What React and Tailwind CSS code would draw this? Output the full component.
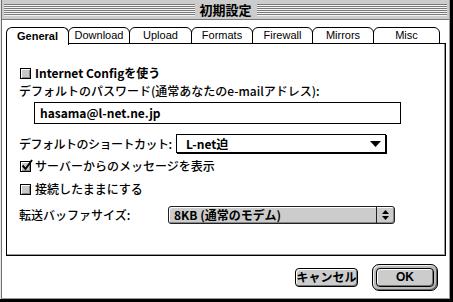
const tabs = [
  ["General", 63],
  ["Download", 62],
  ["Upload", 63],
  ["Formats", 62],
  ["Firewall", 61],
  ["Mirrors", 62],
  ["Misc", 67],
];

export default function App() {
  return (
    <div className="w-[453px] h-[302px] bg-black font-['Noto_Sans_CJK_JP',sans-serif] text-black">
      <div className="w-[450px] h-[299px] border-l border-[#e6e6e6]">
        <div className="h-full flex flex-col bg-white border-l border-r border-b border-l-[#6e6e6e] border-r-[#9a9a9a] border-b-[#9a9a9a]">
          {/* title bar */}
          <div className="h-[20px] shrink-0 bg-[#cccccc] border-b border-[#777] flex items-center px-[2px]">
            <div className="flex-1 h-[12px] bg-[repeating-linear-gradient(to_bottom,#7a7a7a_0px,#7a7a7a_1px,#f4f4f4_1px,#f4f4f4_2px)]" />
            <span className="px-[5px] text-[13px] font-bold leading-none">初期設定</span>
            <div className="flex-1 h-[12px] bg-[repeating-linear-gradient(to_bottom,#7a7a7a_0px,#7a7a7a_1px,#f4f4f4_1px,#f4f4f4_2px)]" />
          </div>

          {/* tabs */}
          <div className="mt-[7px] ml-[4px] h-[17px] flex items-start font-['Liberation_Sans',sans-serif]">
            {tabs.map(([name, w], i) => (
              <div
                key={name}
                style={{ width: w }}
                className={
                  i === 0
                    ? "relative z-10 h-[18px] border border-b-0 border-black rounded-t-[6px] bg-white flex items-center justify-center pb-[1px] text-[11px] font-bold leading-none"
                    : "h-[17px] -ml-px border border-black rounded-t-[6px] bg-white flex items-center justify-center text-[11px] leading-none"
                }
              >
                {name}
              </div>
            ))}
          </div>

          {/* panel */}
          <div className="-mt-px ml-[4px] w-[440px] h-[213px] shrink-0 border border-black shadow-[inset_-1px_-1px_0_#999] text-[12px] font-medium leading-none whitespace-nowrap">
            <div className="mt-[23px] h-[12px] flex items-center pl-[13px] gap-[4px]">
              <Check />
              <span className="font-semibold">Internet Configを使う</span>
            </div>
            <div className="mt-[4px] h-[16px] flex items-center pl-[12px]">
              デフォルトのパスワード(通常あなたのe-mailアドレス):
            </div>
            <div className="mt-[3px] ml-[27px] w-[367px] h-[22px] border border-black flex items-center pl-[5px] font-semibold">
              hasama@l-net.ne.jp
            </div>
            <div className="mt-[10px] h-[19px] flex items-center pl-[12px]">
              <span className="w-[157px] shrink-0 tracking-[-0.5px]">デフォルトのショートカット:</span>
              <div className="w-[210px] h-[19px] bg-white border border-black shadow-[1px_1px_0_#000] flex items-center pl-[9px] pr-[4px]">
                <span className="flex-1 font-bold">L-net迫</span>
                <svg width="11" height="6" viewBox="0 0 11 6">
                  <path d="M0 0H11L5.5 6Z" fill="#000" />
                </svg>
              </div>
            </div>
            <div className="mt-[6px] h-[14px] flex items-center pl-[13px] gap-[4px]">
              <Check checked />
              <span>サーバーからのメッセージを表示</span>
            </div>
            <div className="mt-[9px] h-[14px] flex items-center pl-[13px] gap-[4px]">
              <Check />
              <span>接続したままにする</span>
            </div>
            <div className="mt-[10px] h-[18px] flex items-center pl-[12px]">
              <span className="w-[149px] shrink-0">転送バッファサイズ:</span>
              <div className="w-[227px] h-[18px] bg-[#cccccc] border border-[#222] rounded-[3px] shadow-[inset_1px_1px_0_#fff,inset_-1px_-1px_0_#888] flex items-center">
                <span className="flex-1 pl-[5px] font-bold">8KB (通常のモデム)</span>
                <div className="w-[18px] h-full border-l border-[#222] flex items-center justify-center">
                  <svg width="7" height="10" viewBox="0 0 7 10">
                    <path d="M3.5 0L7 4H0Z M0 6H7L3.5 10Z" fill="#000" />
                  </svg>
                </div>
              </div>
            </div>
          </div>

          {/* buttons */}
          <div className="flex-1 flex items-center justify-end gap-[14px] pr-[11px] text-[12px] font-bold leading-none">
            <button className="w-[63px] h-[19px] bg-[#cccccc] border border-black rounded-[4px] shadow-[inset_1px_1px_0_#fff,inset_-1px_-1px_0_#777] flex items-center justify-center">
              キャンセル
            </button>
            <div className="w-[66px] h-[27px] border border-black rounded-[7px] bg-[#bbbbbb] shadow-[inset_1px_1px_0_#eee,inset_-1px_-1px_0_#666] p-[3px]">
              <button className="w-full h-full bg-[#cccccc] border border-black rounded-[4px] shadow-[inset_1px_1px_0_#fff,inset_-1px_-1px_0_#777] flex items-center justify-center font-['Liberation_Sans',sans-serif]">
                OK
              </button>
            </div>
          </div>
        </div>
      </div>
    </div>
  );
}

function Check({ checked }) {
  return (
    <div className="relative w-[11px] h-[11px] shrink-0 border border-black bg-[#c8c8c8] shadow-[inset_1px_1px_0_#fff,inset_-1px_-1px_0_#888]">
      {checked && (
        <svg className="absolute -top-[3px] left-0" width="12" height="12" viewBox="0 0 12 12">
          <path d="M1.5 6.5L4.5 10L11 1" stroke="#000" strokeWidth="2" fill="none" />
        </svg>
      )}
    </div>
  );
}
